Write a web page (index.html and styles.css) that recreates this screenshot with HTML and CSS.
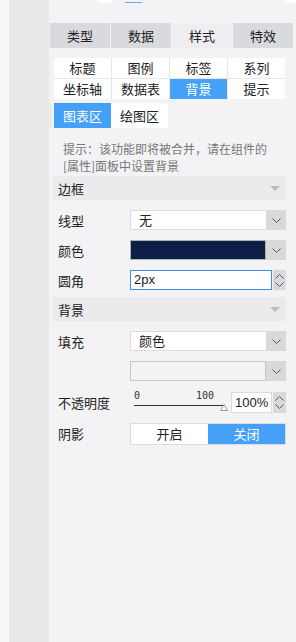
FILE: index.html
```html
<!DOCTYPE html>
<html lang="zh-CN">
<head>
    <meta charset="UTF-8">
    <meta name="viewport" content="width=device-width, initial-scale=1.0">
    <title>样式 - 背景</title>
    <link rel="stylesheet" href="styles.css">
</head>
<body>
    <div class="rail-edge"></div>
    <div class="rail"></div>
    <div class="panel">
        <div class="topbar">
            <span class="top-white"></span>
            <span class="top-line"></span>
            <span class="top-white right"></span>
        </div>

        <div class="tabs">
            <div class="tab">类型</div>
            <div class="tab">数据</div>
            <div class="tab active">样式</div>
            <div class="tab">特效</div>
        </div>

        <div class="subtabs">
            <div class="subtab">标题</div>
            <div class="subtab">图例</div>
            <div class="subtab">标签</div>
            <div class="subtab">系列</div>
            <div class="subtab">坐标轴</div>
            <div class="subtab">数据表</div>
            <div class="subtab on">背景</div>
            <div class="subtab">提示</div>
        </div>

        <div class="areatabs">
            <div class="areatab on">图表区</div>
            <div class="areatab">绘图区</div>
        </div>

        <div class="hint">
            <div>提示：该功能即将被合并，请在组件的</div>
            <div>[属性]面板中设置背景</div>
        </div>

        <div class="section sec1">边框<span class="caret"></span></div>

        <div class="row">
            <label class="lbl">线型</label>
            <div class="combo">
                <div class="combo-val">无</div>
                <div class="combo-btn"><svg width="9" height="5" viewBox="0 0 9 5"><path d="M0.5 0.5 L4.5 4.5 L8.5 0.5" fill="none" stroke="#555" stroke-width="1"/></svg></div>
            </div>
        </div>

        <div class="row">
            <label class="lbl">颜色</label>
            <div class="combo">
                <div class="swatch navy"></div>
                <div class="combo-btn"><svg width="9" height="5" viewBox="0 0 9 5"><path d="M0.5 0.5 L4.5 4.5 L8.5 0.5" fill="none" stroke="#555" stroke-width="1"/></svg></div>
            </div>
        </div>

        <div class="row">
            <label class="lbl">圆角</label>
            <div class="combo">
                <div class="num focus">2px</div>
                <div class="spin">
                    <svg width="9" height="5" viewBox="0 0 9 5"><path d="M0.5 4.5 L4.5 0.5 L8.5 4.5" fill="none" stroke="#555" stroke-width="1"/></svg>
                    <svg width="9" height="5" viewBox="0 0 9 5"><path d="M0.5 0.5 L4.5 4.5 L8.5 0.5" fill="none" stroke="#555" stroke-width="1"/></svg>
                </div>
            </div>
        </div>

        <div class="section">背景<span class="caret"></span></div>

        <div class="row">
            <label class="lbl">填充</label>
            <div class="combo">
                <div class="combo-val">颜色</div>
                <div class="combo-btn"><svg width="9" height="5" viewBox="0 0 9 5"><path d="M0.5 0.5 L4.5 4.5 L8.5 0.5" fill="none" stroke="#555" stroke-width="1"/></svg></div>
            </div>
        </div>

        <div class="row">
            <label class="lbl"></label>
            <div class="combo">
                <div class="swatch empty"></div>
                <div class="combo-btn"><svg width="9" height="5" viewBox="0 0 9 5"><path d="M0.5 0.5 L4.5 4.5 L8.5 0.5" fill="none" stroke="#555" stroke-width="1"/></svg></div>
            </div>
        </div>

        <div class="row opacity">
            <label class="lbl">不透明度</label>
            <div class="slider">
                <div class="ticks"><span>0</span><span>100</span></div>
                <div class="track"></div>
                <svg class="thumb" width="8" height="7" viewBox="0 0 8 7"><path d="M4 0.5 L7.5 6.5 L0.5 6.5 Z" fill="#fff" stroke="#999" stroke-width="1"/></svg>
            </div>
            <div class="num small">100%</div>
            <div class="spin">
                <svg width="9" height="5" viewBox="0 0 9 5"><path d="M0.5 4.5 L4.5 0.5 L8.5 4.5" fill="none" stroke="#555" stroke-width="1"/></svg>
                <svg width="9" height="5" viewBox="0 0 9 5"><path d="M0.5 0.5 L4.5 4.5 L8.5 0.5" fill="none" stroke="#555" stroke-width="1"/></svg>
            </div>
        </div>

        <div class="row">
            <label class="lbl">阴影</label>
            <div class="toggle">
                <div class="opt">开启</div>
                <div class="opt on">关闭</div>
            </div>
        </div>
    </div>
</body>
</html>
```

FILE: styles.css
```css
html{
    height: 100%;
}
body{
    margin: 0;
    padding: 0;
    height: 642px;
    display: flex;
    overflow: hidden;
    font-family: "Noto Sans CJK SC", "Liberation Sans", sans-serif;
    font-size: 13px;
    color: #222;
}

.rail-edge{
    width: 9px;
    background: #f8f8f6;
}
.rail{
    width: 41px;
    background: #e8e8e8;
}
.panel{
    flex: 1;
    background: #f3f3f5;
}

/* leftovers of the toolbar above, cut by the screen edge */
.topbar{
    height: 23px;
    display: flex;
    align-items: flex-start;
}
.top-white{
    width: 12px;
    height: 3px;
    margin-left: 50px;
    background: #fff;
}
.top-white.right{
    width: 10px;
    margin-left: 143px;
}
.top-line{
    width: 17px;
    height: 1px;
    margin-top: 2px;
    margin-left: 14px;
    background: #5fa8f5;
}

.tabs{
    display: flex;
    gap: 1px;
    margin-left: 1px;
}
.tab{
    width: 60px;
    height: 25px;
    line-height: 25px;
    text-align: center;
    background: #d9dadd;
    font-size: 13px;
}
.tab.active{
    background: #eeeef1;
}

.subtabs{
    display: grid;
    grid-template-columns: repeat(4, 57px);
    gap: 1px;
    margin: 10px 0 0 5px;
    width: 231px;
    background: #e6e6e8;
}
.subtab{
    height: 20px;
    line-height: 20px;
    text-align: center;
    background: #fff;
}
.subtab.on, .areatab.on, .opt.on{
    background: #45a0f8;
    color: #fff;
}

.areatabs{
    display: flex;
    margin: 4px 0 0 1px;
    padding-left: 3px;
    border-left: 1px solid #dcdcdc;
}
.areatab{
    width: 57px;
    height: 25px;
    line-height: 25px;
    text-align: center;
    background: #fff;
}

.hint{
    display: flex;
    flex-direction: column;
    gap: 0;
    margin: 12px 0 0 14px;
    font-size: 12px;
    line-height: 17px;
    color: #777;
}

.section{
    display: flex;
    justify-content: space-between;
    align-items: center;
    height: 24px;
    margin: 7px 10px 0 4px;
    padding: 0 6px 0 5px;
    background: #ebebec;
}
.section.sec1{
    margin-top: 2px;
}
.caret{
    width: 0;
    height: 0;
    border-left: 5px solid transparent;
    border-right: 5px solid transparent;
    border-top: 5px solid #bbb;
}

.row{
    display: flex;
    align-items: center;
    margin: 10px 10px 0 9px;
    height: 20px;
}
.lbl{
    width: 72px;
    flex: none;
}
.combo{
    flex: 1;
    display: flex;
    height: 20px;
}
.combo-val{
    flex: 1;
    background: #fff;
    border: 1px solid #dcdcdc;
    border-right: none;
    padding-left: 8px;
    line-height: 18px;
}
.combo-btn{
    width: 20px;
    background: #d9d9dc;
    display: flex;
    align-items: center;
    justify-content: center;
}
.swatch{
    flex: 1;
    border: 1px solid #b0b0b0;
}
.swatch.navy{
    background: #0b1f47;
}
.swatch.empty{
    background: #f3f3f3;
    border-color: #c8c8c8;
}
.num{
    flex: 1;
    background: #fff;
    border: 1px solid #3c8ee8;
    padding-left: 3px;
    line-height: 18px;
    font-family: "Liberation Sans", sans-serif;
    font-size: 13px;
}
.spin{
    width: 13px;
    margin-left: 1px;
    background: #d9d9dc;
    display: flex;
    flex-direction: column;
    align-items: center;
    justify-content: space-around;
    padding: 2px 0;
}

.row.opacity{
    height: 21px;
    margin-top: 11px;
}
.opacity .spin{
    height: 17px;
}
.slider{
    position: relative;
    width: 97px;
    margin-left: 4px;
    height: 21px;
}
.ticks{
    display: flex;
    justify-content: space-between;
    width: 80px;
    font-family: "DejaVu Sans Mono", monospace;
    font-size: 10px;
    line-height: 10px;
    color: #333;
    margin-top: -1px;
}
.track{
    height: 1px;
    background: #333;
    margin-top: 4px;
    width: 90px;
}
.thumb{
    position: absolute;
    left: 86px;
    top: 12px;
}
.num.small{
    flex: none;
    width: 36px;
    border-color: #dcdcdc;
    line-height: 19px;
    font-size: 13px;
}

.toggle{
    flex: 1;
    display: flex;
    height: 20px;
    border: 1px solid #dcdcdc;
    margin-top: 2px;
}
.opt{
    flex: 1;
    text-align: center;
    line-height: 20px;
    background: #fff;
}
```
